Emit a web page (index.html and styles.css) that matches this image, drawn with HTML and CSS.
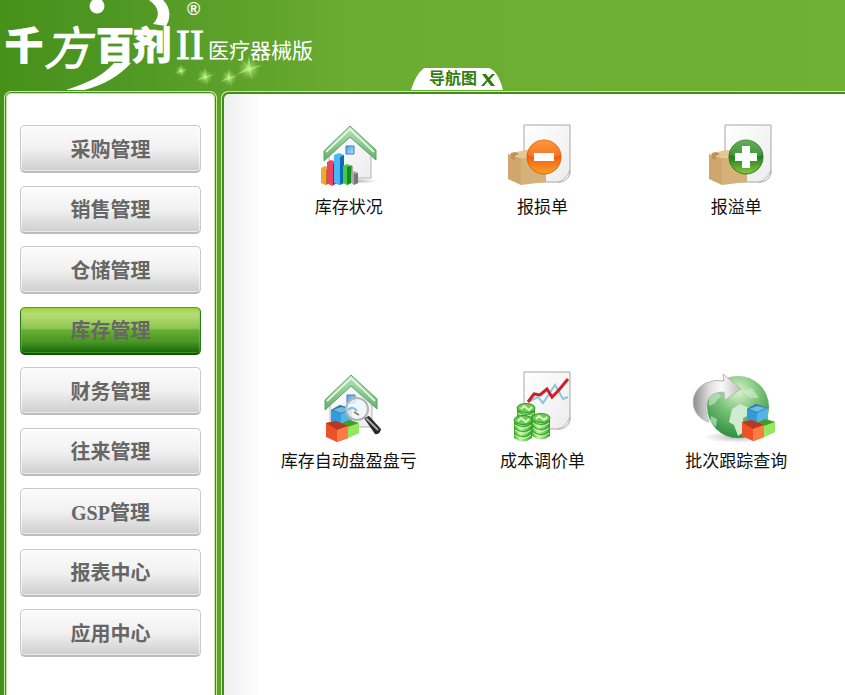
FILE: index.html
```html
<!DOCTYPE html>
<html lang="zh-CN">
<head>
<meta charset="utf-8">
<meta name="viewport" content="width=device-width, initial-scale=1">
<title>千方百剂II 医疗器械版</title>
<link rel="stylesheet" href="styles.css">
</head>
<body>
<header class="header">
  <svg class="logo" viewBox="0 0 330 90" role="img" aria-label="千方百剂II 医疗器械版">
    <defs>
      <radialGradient id="glow"><stop offset="0" stop-color="#d8ffa8"/><stop offset=".3" stop-color="#b4ec7c" stop-opacity=".6"/><stop offset="1" stop-color="#8fd050" stop-opacity="0"/></radialGradient>
      <g id="star"><circle r="8" fill="url(#glow)"/><path d="M0-10 1-1 10-3 1 1 3 9 0 1-9 4-1-1-7-8-1-2Z" fill="#c5f596" opacity=".6"/></g>
    </defs>
    <circle cx="97" cy="6" r="7.500" fill="#fff"/>
    <path d="M149 0H163C171 8 171 18 166 26L153 24C161 16 159 7 149 0Z" fill="#fff"/>
    <path d="M114 63H131C119 76 104 85 84 90H66C88 83 104 75 114 63Z" fill="#fff"/>
    <text class="logo-heavy" x="5" y="59">千</text>
    <text class="logo-brush" x="44" y="65">方</text>
    <text class="logo-heavy" x="96" y="59">百</text>
    <text class="logo-heavy" x="133" y="59">剂</text>
    <text class="logo-roman" x="176" y="59">II</text>
    <text class="logo-reg" x="187" y="15">®</text>
    <text class="logo-edition" x="208" y="58">医疗器械版</text>
    <use href="#star" transform="translate(181 71) scale(.7)"/>
    <use href="#star" transform="translate(205 77)"/>
    <use href="#star" transform="translate(229 78)"/>
    <use href="#star" transform="translate(249 69) scale(1.400)"/>
  </svg>
  <div class="tab">
    <a class="tab-title" href="#guide">导航图</a>
    <button class="tab-close" type="button" aria-label="关闭"><svg viewBox="0 0 14 12"><path d="M1 0H5L7.500 3.500 11 0H14L9 5.500 14 12H10L6.500 7.500 3 12H0L5.500 6Z" fill="#347c12"/></svg></button>
  </div>
</header>

<div class="workspace">
  <nav class="sidebar" aria-label="主菜单">
    <button class="menu" type="button">采购管理</button>
    <button class="menu" type="button">销售管理</button>
    <button class="menu" type="button">仓储管理</button>
    <button class="menu menu-active" type="button" aria-current="page">库存管理</button>
    <button class="menu" type="button">财务管理</button>
    <button class="menu" type="button">往来管理</button>
    <button class="menu" type="button">GSP管理</button>
    <button class="menu" type="button">报表中心</button>
    <button class="menu" type="button">应用中心</button>
  </nav>

  <main class="content" id="guide">
    <svg class="defs" aria-hidden="true">
      <defs>
        <linearGradient id="roof" x2="0" y2="1"><stop offset="0" stop-color="#b9e3bb"/><stop offset="1" stop-color="#62b067"/></linearGradient>
        <linearGradient id="wall" x2="1" y2="1"><stop offset="0" stop-color="#fff"/><stop offset="1" stop-color="#ececec"/></linearGradient>
        <linearGradient id="pane" x2="1" y2="1"><stop offset="0" stop-color="#4f9fdb"/><stop offset="1" stop-color="#b5e0fa"/></linearGradient>
        <linearGradient id="orange" x2="0" y2="1"><stop offset="0" stop-color="#ff8a1c"/><stop offset=".5" stop-color="#f5600c"/><stop offset="1" stop-color="#fba02c"/></linearGradient>
        <linearGradient id="green" x2="0" y2="1"><stop offset="0" stop-color="#4aa038"/><stop offset=".5" stop-color="#20801d"/><stop offset="1" stop-color="#8ac63f"/></linearGradient>
        <linearGradient id="arrow" x2="1" y2="0"><stop offset="0" stop-color="#8c8c8c"/><stop offset=".35" stop-color="#e0e0e0"/><stop offset=".6" stop-color="#fafafa"/><stop offset="1" stop-color="#bcbcbc"/></linearGradient>
        <radialGradient id="globe" cx=".5" cy=".25" r=".75"><stop offset="0" stop-color="#d9f5cd"/><stop offset=".45" stop-color="#7cc47a"/><stop offset="1" stop-color="#2d8e40"/></radialGradient>
        <radialGradient id="shade"><stop offset="0" stop-color="#777" stop-opacity=".55"/><stop offset="1" stop-color="#999" stop-opacity="0"/></radialGradient>
        <linearGradient id="coin" x2="1" y2="0"><stop offset="0" stop-color="#3fae2c"/><stop offset=".35" stop-color="#c4f8a6"/><stop offset="1" stop-color="#36a028"/></linearGradient>
        <g id="house">
          <path d="M7 24 28 4 49 25V53H7Z" fill="url(#wall)" stroke="#b4b4b4"/>
          <path d="M28 1 54 25V35L28 12 2 36V26Z" fill="url(#roof)" stroke="#5ba567"/>
          <path d="M4 27 28 4 52 27" fill="none" stroke="#ddf5dc" stroke-width="2"/>
          <path d="M24 21h8v8h-8Z" fill="url(#pane)" stroke="#3c80bd"/>
        </g>
        <g id="sheet">
          <path d="M1 1H47V49Q45 57 36 58H1Z" fill="url(#wall)" stroke="#a6a6a6"/>
          <path d="M35 58Q43 56 47 46Q47 56 38 58Z" fill="#fff" stroke="#b5b5b5"/>
        </g>
        <g id="box">
          <path d="M0 5 13 9V36L0 30Z" fill="#cfa76e"/>
          <path d="M13 9 38 7V33L13 36Z" fill="#d6b27b"/>
          <path d="M0 5 17 1 38 2V7L13 9Z" fill="#e6c794"/>
          <path d="M3 4 7 3 11 5 7 7V11L3 10Z" fill="#bd935b"/>
        </g>
        <g id="blocks">
          <path d="M5 5 14 0 26 4V18L15 22 5 18Z" fill="#309cdb"/><path d="M5 5 14 0 26 4 15 9Z" fill="#3479aa"/><path d="M7 5 15 8 24 4 15 2Z" fill="#6dbce5"/><path d="M15 9 26 4V18L15 22Z" fill="#55b4e6"/>
          <path d="M14 19 23 15 33 18V28L14 36Z" fill="#73d444"/><path d="M14 19 23 15 33 18 22 22Z" fill="#449b2b"/><path d="M22 22 33 18V28L22 33Z" fill="#94e760"/>
          <path d="M0 18 10 16 22 21V33L11 37 0 32Z" fill="#ec5127"/><path d="M0 18 10 16 22 21 11 25Z" fill="#b63921"/><path d="M11 25 22 21V33L11 37Z" fill="#ff7b42"/>
        </g>
        <g id="stack">
          <path d="M0 5V23Q9 30 18 23V5Z" fill="url(#coin)"/>
          <path d="M0 8Q9 15 18 8M0 13Q9 20 18 13M0 18Q9 25 18 18" fill="none" stroke="#2f9a24"/>
          <path d="M1 10Q9 17 17 10M1 15Q9 22 17 15M1 20Q9 27 17 20" fill="none" stroke="#c9f7ae"/>
          <ellipse cx="9" cy="5" rx="9" ry="4.500" fill="#73ca56" stroke="#2c9d25"/>
          <path d="M4 6 7 3 12 7 15 4" fill="none" stroke="#dcfccb" stroke-width="2"/>
        </g>
      </defs>
    </svg>
    <div class="guide">
      <a class="item" href="#stock">
        <svg class="icon" viewBox="0 0 90 72">
          <ellipse cx="53" cy="64" rx="22" ry="3" fill="url(#shade)"/>
          <use href="#house" x="18" y="8"/>
          <path d="M41 49h7v12h-7Z" fill="#d79f5a" stroke="#8f6b3e"/>
          <path d="M17 51 21 49 26 51V66L21 68 17 66Z" fill="#eeaa34"/><path d="M22 53 26 51V66L22 68Z" fill="#b87013"/>
          <path d="M23 45 27 43 33 45V66L28 69 23 66Z" fill="#f0416a"/><path d="M29 47 33 45V66L29 68Z" fill="#a7133b"/>
          <path d="M30 38 35 36 40 38V66L35 68 30 66Z" fill="#49b7f2"/><path d="M36 40 40 38V66L36 68Z" fill="#106bb6"/>
          <path d="M39 49 43 47 47 49V66L43 68 39 66Z" fill="#43cb42"/><path d="M43 50 47 49V66L43 68Z" fill="#158a20"/>
          <path d="M47 56 50 54 54 56V66L50 68 47 66Z" fill="#aaa"/><path d="M50 57 54 56V66L50 68Z" fill="#777"/>
        </svg>
        <span>库存状况</span>
      </a>
      <a class="item" href="#loss">
        <svg class="icon" viewBox="0 0 90 72">
          <use href="#sheet" x="26" y="7"/>
          <use href="#box" x="11" y="32"/>
          <circle cx="47" cy="40" r="17" fill="url(#orange)" stroke="#dc6209"/>
          <path d="M31 38A16 16 0 0 1 63 38Q47 45 31 38Z" fill="#fff" opacity=".12"/>
          <path d="M37 36h20v8H37Z" fill="#fff"/>
        </svg>
        <span>报损单</span>
      </a>
      <a class="item" href="#gain">
        <svg class="icon" viewBox="0 0 90 72">
          <use href="#sheet" x="33" y="7"/>
          <use href="#box" x="18" y="32"/>
          <circle cx="55" cy="40" r="17" fill="url(#green)" stroke="#2b7f1c"/>
          <path d="M39 38A16 16 0 0 1 71 38Q55 45 39 38Z" fill="#fff" opacity=".15"/>
          <path d="M51 29h8v7h7v8h-7v7h-8v-7h-7v-8h7Z" fill="#fff"/>
        </svg>
        <span>报溢单</span>
      </a>
      <a class="item" href="#count">
        <svg class="icon" viewBox="0 0 90 72">
          <use href="#house" x="19" y="3"/>
          <use href="#blocks" x="22" y="34"/>
          <path d="M60 47 65 45 77 58Q76 64 71 63Z" fill="#292929"/>
          <path d="M62 47 74 59" stroke="#aaa" stroke-width="2"/>
          <circle cx="53" cy="38" r="11" fill="#eef7ff" fill-opacity=".8" stroke="#b4b4b4" stroke-width="2"/>
          <path d="M44 39Q48 34 53 40" fill="none" stroke="#7cbde7" stroke-width="2"/>
          <path d="M50 41 55 44" fill="none" stroke="#9b7a4c" stroke-width="2"/>
        </svg>
        <span>库存自动盘盈盘亏</span>
      </a>
      <a class="item" href="#price">
        <svg class="icon" viewBox="0 0 90 72">
          <use href="#sheet" x="26" y="0"/>
          <path d="M33 30 41 26 46 32 58 14 66 28 71 26" fill="none" stroke="#8fc3df" stroke-width="2"/>
          <path d="M31 31 37 23 43 24 50 18 55 26 61 20 71 8" fill="none" stroke="#cc202d" stroke-width="3"/>
          <use href="#stack" x="20" y="32"/><use href="#stack" x="35" y="42"/><use href="#stack" x="17" y="44"/>
        </svg>
        <span>成本调价单</span>
      </a>
      <a class="item" href="#trace">
        <svg class="icon" viewBox="0 0 90 72">
          <ellipse cx="46" cy="66" rx="34" ry="6" fill="url(#shade)"/>
          <circle cx="47" cy="36" r="31" fill="url(#globe)"/>
          <path d="M41 38 49 33 58 37 56 45 52 47 53 61 47 65 43 54 38 51Z" fill="#d0ecd0"/>
          <path d="M18 24 26 20 30 25 23 33 18 35ZM20 45 26 48 25 56 19 50ZM51 20 61 17 68 27 59 27Z" fill="#d0ecd0" opacity=".6"/>
          <path d="M18 51C-1 46-4 21 15 12Q24 8 33 10L32 3 50 18 34 29 33 21Q19 21 16 31Q13 40 18 51Z" fill="url(#arrow)" stroke="#b7b7b7"/>
          <use href="#blocks" x="51" y="33"/>
        </svg>
        <span>批次跟踪查询</span>
      </a>
    </div>
  </main>
</div>
</body>
</html>
```
FILE: styles.css
```css
* { box-sizing: border-box; }

body {
  margin: 0;
  min-height: 100vh;
  display: flex;
  flex-direction: column;
  font-family: "Liberation Sans", "Noto Sans CJK SC", sans-serif;
  background: linear-gradient(90deg, #46911a 0, #4d9622 100px, #6cac32 360px, #70b034 100%);
}

a { color: inherit; text-decoration: none; }
button { font: inherit; cursor: pointer; }

.header {
  display: flex;
  align-items: flex-end;
  gap: 81px;
  height: 90px;
}

.logo { width: 330px; height: 90px; flex: none; fill: #fff; }
.logo text { font-family: "Noto Sans CJK SC", sans-serif; }
.logo .logo-heavy { font-size: 38px; font-weight: 900; stroke: #fff; stroke-width: 1px; }
.logo .logo-brush { font-size: 46px; font-style: italic; font-weight: 400; stroke: #fff; stroke-width: 1px; }
.logo .logo-roman { font-family: "Liberation Serif", serif; font-size: 42px; stroke: #fff; stroke-width: 1px; }
.logo .logo-reg { font-family: "Liberation Sans", sans-serif; font-size: 18px; font-weight: 700; }
.logo .logo-edition { font-size: 21px; stroke: #fff; stroke-width: 0; }

.tab {
  display: flex;
  align-items: center;
  gap: 4px;
  width: 92px;
  height: 22px;
  padding-left: 18px;
  background: #fff;
  clip-path: path("M0 22Q5 6 13 0H78Q87 3 92 22Z");
  color: #347c12;
  font-size: 16px;
  line-height: 22px;
  font-weight: 700;
}

.tab-close { display: flex; padding: 2px 0 0; border: 0; background: none; }
.tab-close svg { width: 14px; height: 12px; }

.workspace {
  flex: 1;
  display: flex;
  gap: 4px;
  padding-left: 4px;
}

.sidebar,
.content {
  margin-top: 1px;
  border: 1px solid #c4e8a4;
  border-bottom: 0;
  background: #fff;
}

.sidebar {
  flex: none;
  width: 213px;
  padding: 33px 15px 38px;
  border-radius: 7px 7px 0 0;
  box-shadow: inset 0 1px 0 #438c1e, inset 1px 0 0 #438c1e, inset -1px 0 0 #438c1e, inset 0 2px 0 #c4e8a4, inset 2px 0 0 #c4e8a4, inset -2px 0 0 #c4e8a4;
  display: grid;
  grid-auto-rows: 48px;
  align-content: space-between;
}

.menu {
  padding: 2px 0 0;
  border: 1px solid #c9c9c9;
  border-bottom: 2px solid #bcbcbc;
  border-radius: 5px;
  background: linear-gradient(#fcfcfc, #f1f1f1 50%, #cecece);
  box-shadow: inset 0 0 0 1px #ffffff99;
  color: #666;
  font-family: "Liberation Serif", "Noto Sans CJK SC", serif;
  font-size: 20px;
  line-height: 24px;
  font-weight: 700;
}

.menu-active {
  border-color: #5d9d1c #2a7d13 #0d5209;
  background: linear-gradient(#9ed548, #b5dd75 15%, #8dc552 45%, #67ad32 50%, #4a9724 75%, #12660a);
  box-shadow: inset 0 0 0 1px #8cd01c66;
}

.content {
  flex: 1;
  min-width: 0;
  border-right: 0;
  border-radius: 7px 0 0 0;
  box-shadow: inset 1px 1px 0 1px #438c1e;
  background: linear-gradient(90deg, #ededed, #fff 38px);
  padding: 25px 12px 0 30px;
}

.defs { display: block; width: 0; height: 0; }

.guide {
  display: grid;
  grid-template-columns: repeat(3, minmax(0, 194px));
  row-gap: 152px;
}

.item {
  display: flex;
  flex-direction: column;
  align-items: center;
  gap: 8px;
  color: #111;
  font-size: 17px;
  line-height: 22px;
  white-space: nowrap;
}

.icon { width: 90px; height: 72px; }
```
